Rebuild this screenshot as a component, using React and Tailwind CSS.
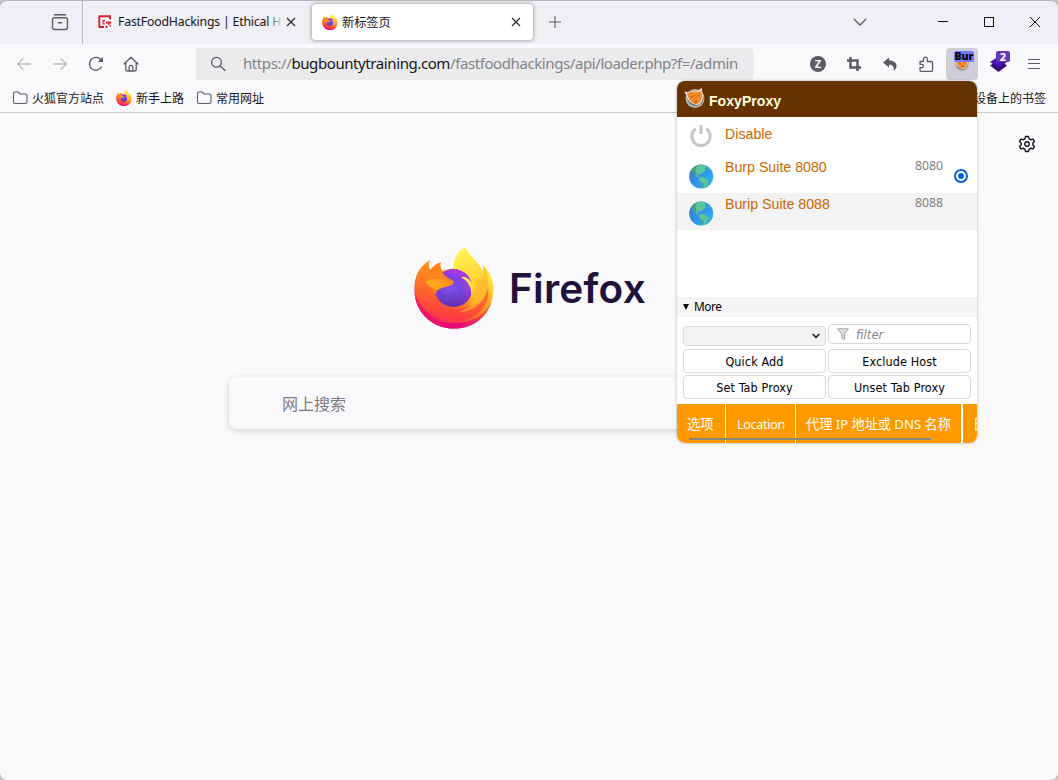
import React, { useId } from "react";

function FirefoxLogo({ className }) {
  const id = useId().replace(/[^a-zA-Z0-9]/g, "");
  const u = (n) => `url(#${id}${n})`;
  return (
    <svg viewBox="0 0 80 82" className={className}>
      <defs>
        <linearGradient id={id + "body"} x1="0.82" y1="0.1" x2="0.2" y2="0.95">
          <stop offset="0.05" stopColor="#fff44f" />
          <stop offset="0.3" stopColor="#ffc02f" />
          <stop offset="0.52" stopColor="#ff8a1c" />
          <stop offset="0.75" stopColor="#ff4a3a" />
          <stop offset="1" stopColor="#f0096d" />
        </linearGradient>
        <linearGradient id={id + "flame"} x1="0.3" y1="0" x2="0.6" y2="1">
          <stop offset="0" stopColor="#fff44f" />
          <stop offset="0.5" stopColor="#ffd83a" />
          <stop offset="1" stopColor="#ff9a1f" />
        </linearGradient>
        <linearGradient id={id + "face"} x1="0.6" y1="0" x2="0.4" y2="1">
          <stop offset="0.1" stopColor="#ff9a1c" />
          <stop offset="0.5" stopColor="#ff6e26" />
          <stop offset="0.95" stopColor="#ff3647" />
        </linearGradient>
        <linearGradient id={id + "rim"} x1="0" y1="0" x2="1" y2="0">
          <stop offset="0" stopColor="#f5156c" />
          <stop offset="0.6" stopColor="#e5067a" />
          <stop offset="1" stopColor="#ff5a35" />
        </linearGradient>
        <radialGradient id={id + "ball"} cx="0.42" cy="0.55" r="0.62">
          <stop offset="0" stopColor="#8a50f5" />
          <stop offset="0.45" stopColor="#7547e0" />
          <stop offset="1" stopColor="#b833e1" />
        </radialGradient>
        <linearGradient id={id + "shade"} x1="0" y1="0" x2="0" y2="1">
          <stop offset="0.5" stopColor="#4a3bb5" stopOpacity="0" />
          <stop offset="1" stopColor="#5a2b9c" stopOpacity="0.8" />
        </linearGradient>
        <linearGradient id={id + "snout"} x1="0" y1="0" x2="1" y2="0">
          <stop offset="0" stopColor="#ffb01f" />
          <stop offset="1" stopColor="#ff8d1d" />
        </linearGradient>
      </defs>
      <path d="M16 13C14 17 15 20 16 23C19 20 23 16 26.700 15.700C25.500 18 26.500 21 28 24C32 22 36 22 39.500 21.500C39 12 45 3 52 0C52 8 64 14 68 25C70 23 69 20 69 18C75 24 79.500 32 79.500 42C79.500 65 62 81.600 40 81.600C17 81.600 .5 64 .5 42C.5 29 5 20 16 13Z" fill={u("body")} />
      <path d="M.5 45C3 63 19 76 40 76C57 76 70 69 77 56C71 73 57 81.600 40 81.600C18 81.600 1 65 .5 45Z" fill={u("rim")} />
      <path d="M39.500 22C39 12 45 3 52 0C52 8 66 13 70 28C77 50 62 70 42 70C55 65 61 54 59 42C56 28 46 25 39.500 22Z" fill={u("flame")} />
      <path d="M16 13C14 17 15 20 16 23C19 20 23 16 26.700 15.700C25.500 18 26.500 21 28 24C21 31 22 33 22 41C22 54 31 62 42 62C52 62 59 56 66 56C70 51 73 46 74 40C77 60 60 75 40 75C18 75 3 58 .8 42C.8 29 5 20 16 13Z" fill={u("face")} />
      <path d="M74 34C75 53 60 65 45 65C55 62 61 55 62 47C64 39 62 34 59 30C68 35 71 30 69 18C73 23 74 28 74 34Z" fill="#ffb92c" opacity="0.7" />
      <circle cx="39.500" cy="41" r="19" fill={u("ball")} />
      <circle cx="39.500" cy="41" r="19" fill={u("shade")} />
      <path d="M47 30C52 29 58 34 60 40C63 48 60 55 54 59C58 51 58 43 55 38C53 34 50 32 47 30Z" fill={u("flame")} />
      <path d="M16 23C19 20 23 16 26.700 15.700C25.500 18 26.500 21 28 24C29 29 36 32 39.500 34C40 36 36 39 33 39.500C27 41 22 42 22 48C18 43 14 38 11 35C12 30 13 27 16 23Z" fill="#ff8420" />
      <path d="M11 35C17 31 28 32 39.500 35C39 38 35 39 31 40C26 41 24 44 21 42C17 40 14 38 11 35Z" fill={u("snout")} />
    </svg>
  );
}

function Folder() {
  return (
    <svg viewBox="0 0 16 16" className="h-4 w-4 shrink-0" fill="none" stroke="#5b5b66" strokeWidth="1.100">
      <path d="M1.500 3.500a1.500 1.500 0 0 1 1.500-1.500h3.200l2 2H13.500a1.500 1.500 0 0 1 1.500 1.500v6.500a1.500 1.500 0 0 1-1.500 1.500H3a1.500 1.500 0 0 1-1.500-1.500z" />
    </svg>
  );
}

function Arrow({ className }) {
  return (
    <svg viewBox="0 0 16 16" className={className} fill="none" stroke="#bcbcc2" strokeWidth="1.300" strokeLinecap="round" strokeLinejoin="round">
      <path d="M14.500 8H1.500M7 2.800L1.500 8L7 13.200" />
    </svg>
  );
}

function Close({ className }) {
  return (
    <svg viewBox="0 0 10 10" className={className} fill="none" stroke="#2b2a33" strokeWidth="1.150">
      <path d="M1 1L9 9M9 1L1 9" />
    </svg>
  );
}

function FoxBadge({ className }) {
  return (
    <svg viewBox="0 0 22 22" className={className}>
      <circle cx="11" cy="11.500" r="9.500" fill="#b4b4b4" />
      <circle cx="11.500" cy="11" r="8" fill="#77736e" />
      <path d="M.3 4.500L5.500 5.500C8 3.800 12 3 14.500 3.500L17.500 .7L18.500 6C20 11 18 16.500 13.500 18C9 18 4 14 3 9.500Z" fill="#f3e7d8" />
      <path d="M3 6.500C7 4.500 12 3.800 15.500 5L17 3L17.800 7.500C18.500 12 16 16.500 12.500 17.300C8.500 16.500 5 13 4 9.500Z" fill="#f08a26" />
      <path d="M6.500 9.500L9.500 10.300M12.500 10L15 7.500" stroke="#b05a16" strokeWidth="1" />
      <path d="M10.500 14.200L13 13.500L12.300 15.800Z" fill="#8a4510" />
    </svg>
  );
}

function Globe() {
  const id = useId().replace(/[^a-zA-Z0-9]/g, "");
  return (
    <svg viewBox="0 0 24 24" className="h-[25px] w-[25px]">
      <defs>
        <linearGradient id={id} x1="0" y1="0" x2="1" y2="0.8">
          <stop offset="0" stopColor="#3f78b8" />
          <stop offset="0.5" stopColor="#2f92e6" />
          <stop offset="1" stopColor="#2fb4fb" />
        </linearGradient>
      </defs>
      <circle cx="11.700" cy="12" r="11.600" fill={`url(#${id})`} />
      <path d="M2.200 6C4 3 7 .8 11 .5L15 1.500L17 3L15 4.500L16.500 6.500L13.500 8L11 10.500L9 9.500L8 11.500L10 13L12.500 12.500L17 14L19.500 16.500L17.500 19L15.500 22.800L13 23.300L12 18L9.500 15.500L9.800 13.500L6.500 12L4.500 8Z" fill="#5bc69a" />
      <path d="M2.200 6C4 3.500 6 2 8 1.300L6 6L7.500 9L6.500 12L4.500 8ZM12 17L14 19L13.500 23.200L13 23.300Z" fill="#4f9a7c" />
      <path d="M19 3L20.500 5L20 7L18 5Z" fill="#4bbd9c" />
    </svg>
  );
}

function TabBar() {
  return (
    <div className="flex h-[44px] shrink-0 bg-[#f0eff4]">
      <div className="flex w-[83px] items-center border-r border-[#b8b8bd] pl-[51px]">
        <svg viewBox="0 0 18 18" className="h-[18px] w-[18px]" fill="none" stroke="#5b5b66" strokeWidth="1.400" strokeLinecap="round">
          <path d="M3.500 1.700H14.500M1.500 6.800Q1.500 4.700 3.500 4.700H14.500Q16.500 4.700 16.500 6.800V14.500Q16.500 16.500 14.500 16.500H3.500Q1.500 16.500 1.500 14.500ZM7.300 9.700H10.700" />
        </svg>
      </div>
      <div className="flex w-[223px] items-center pl-[14px]">
        <svg viewBox="0 0 16 16" className="h-4 w-4 shrink-0">
          <path d="M0 0H16V16H0Z" fill="#fff" />
          <path d="M13 5.500V2.300H2.300V13H7" fill="none" stroke="#e01b2b" strokeWidth="1.900" />
          <path d="M5.500 6H8V7.500H6.500V9.500H8V10.500H5.500Z" fill="#e01b2b" />
          <path d="M9 7.500H14.200V9.500H12.500V11H11V9.500H9ZM8.500 11.500H10.500V14H8.500ZM12.500 11H14V12.500H12.500Z" fill="#e01b2b" />
        </svg>
        <div className="relative ml-[5px] w-[165px] overflow-hidden pt-px text-[12.300px] tracking-[-0.2px] whitespace-nowrap text-[#15141a]">
          FastFoodHackings | Ethical H
          <div className="absolute inset-y-0 right-0 w-4 bg-gradient-to-r from-transparent to-[#f0eff4]" />
        </div>
        <Close className="ml-[3px] h-[10px] w-[10px] shrink-0" />
      </div>
      <div className="mt-1 ml-[6px] flex h-9 w-[221px] items-center rounded bg-white pl-[10px] shadow-[0_0_4px_rgba(0,0,0,0.45)]">
        <FirefoxLogo className="h-4 w-4" />
        <span className="ml-[4px] w-[50px] pt-[2px] text-[12.200px] whitespace-nowrap text-[#15141a]">新标签页</span>
        <Close className="ml-[119px] h-[10px] w-[10px]" />
      </div>
      <div className="flex flex-1 items-center pl-[16px]">
        <svg viewBox="0 0 12 12" className="h-3 w-3" stroke="#5b5b66" strokeWidth="1.100"><path d="M6 0V12M0 6H12" /></svg>
        <svg viewBox="0 0 14 8" className="ml-[292px] h-2 w-[14px]" fill="none" stroke="#5b5b66" strokeWidth="1.300"><path d="M1 1L7 7L13 1" /></svg>
        <svg viewBox="0 0 10 10" className="ml-[71px] h-[10px] w-[10px]" stroke="#111" strokeWidth="1"><path d="M0 4.500H10" /></svg>
        <div className="ml-[36px] h-[10px] w-[10px] border border-[#111]" />
        <svg viewBox="0 0 10 10" className="ml-[36px] h-[10px] w-[10px]" stroke="#111" strokeWidth="1"><path d="M0 0L10 10M10 0L0 10" /></svg>
      </div>
    </div>
  );
}

function NavBar() {
  return (
    <div className="flex h-[40px] shrink-0 items-center">
      <Arrow className="ml-[16px] h-4 w-4" />
      <Arrow className="ml-[20px] h-4 w-4 rotate-180" />
      <svg viewBox="0 0 16 16" className="ml-[20px] h-4 w-4" fill="none" stroke="#5b5b66" strokeWidth="1.300">
        <path d="M13.700 10.500A6.400 6.400 0 1 1 12.600 3.500L14.500 5.400" />
        <path d="M15 .8V6H9.800Z" fill="#5b5b66" stroke="none" />
      </svg>
      <svg viewBox="0 0 16 16" className="ml-[19px] h-4 w-4" fill="none" stroke="#5b5b66" strokeWidth="1.300" strokeLinejoin="round" strokeLinecap="round">
        <path d="M1 8L8 1.200L15 8M2.800 6.500V13.500Q2.800 15 4.300 15H11.700Q13.200 15 13.200 13.500V6.500M6.200 15V10.500Q6.200 9.300 8 9.300Q9.800 9.300 9.800 10.500V15" />
      </svg>
      <div className="ml-[57px] flex h-8 w-[558px] items-center rounded bg-[#ebebed] pl-[14px]">
        <svg viewBox="0 0 16 16" className="h-4 w-4 shrink-0" fill="none" stroke="#5b5b66" strokeWidth="1.300" strokeLinecap="round"><circle cx="6.500" cy="6.300" r="4.900" /><path d="M10.200 10L15 14.500" /></svg>
        <div className="ml-[17px] pb-[2px] text-[15px] leading-5 tracking-[-0.41px] whitespace-nowrap text-[#828287]">
          https://<span className="text-[#15141a]">bugbountytraining.com</span>/fastfoodhackings/api/loader.php?f=/admin
        </div>
      </div>
      <div className="ml-[56px] flex h-4 w-4 items-center justify-center rounded-full bg-[#5b5b66] text-[11px] font-bold text-white">Z</div>
      <svg viewBox="0 0 16 16" className="ml-[20px] h-4 w-4" fill="none" stroke="#5b5b66" strokeWidth="2.500"><path d="M4.500 1V11.500H15M1 4.500H11.500V15" /></svg>
      <svg viewBox="0 0 16 16" className="ml-[20px] h-4 w-4" fill="#5b5b66"><path d="M1 6.500L7 1.500V4.500C12 4.500 15 7 14.500 10.500C14.300 12.500 13 14 11.500 14.800C12.500 11.500 11 8.800 7 8.800V11.500Z" /></svg>
      <svg viewBox="0 0 16 16" className="ml-[20px] h-4 w-4" fill="none" stroke="#5b5b66" strokeWidth="1.300" strokeLinejoin="round">
        <path d="M2 5.500H5.500V3A1.900 1.900 0 0 1 9.300 3V5.500H13.500Q14.500 5.500 14.500 6.500V14.300Q14.500 15.300 13.500 15.300H3Q2 15.300 2 14.300V11.700H3.700A1.700 1.700 0 0 0 3.700 8.300H2Z" />
      </svg>
      <div className="relative ml-[12px] flex h-8 w-8 justify-center rounded bg-[#cfced7]">
        <FoxBadge className="mt-[8px] h-4 w-4" />
        <span className="absolute top-[3px] left-[8px] h-[11px] w-5 overflow-hidden rounded-[2px] bg-[#7878fa] text-center font-['Open_Sans',sans-serif] text-[10.500px] leading-[11px] font-extrabold text-black">Bur</span>
      </div>
      <div className="relative ml-[12px] h-5 w-5">
        <svg viewBox="0 0 20 20" className="h-5 w-5"><path d="M0 11.500L9 6L17 11.500L8.500 18Z" fill="#321078" /><path d="M0 8L9 2L17 8L8.500 14Z" fill="#4b11ad" /></svg>
        <span className="absolute -top-[3px] left-[6px] h-[11px] w-[14px] rounded-[2px] bg-[#6837bd] text-center text-[11px] leading-[11px] font-bold text-white">2</span>
      </div>
      <svg viewBox="0 0 12 12" className="ml-[18px] h-3 w-3" stroke="#5b5b66" strokeWidth="1.200"><path d="M0 1.500H12M0 5.500H12M0 10.500H12" /></svg>
    </div>
  );
}

function Bookmarks() {
  return (
    <div className="flex h-[29px] shrink-0 items-center border-b border-[#cbcbcf] pr-[12px] pl-[12px] text-[12px] text-[#15141a]">
      <Folder /><span className="ml-1 pt-[2px]">火狐官方站点</span>
      <FirefoxLogo className="ml-[12px] h-4 w-4" /><span className="ml-1 pt-[2px]">新手上路</span>
      <div className="ml-[12px]"><Folder /></div><span className="ml-1 pt-[2px]">常用网址</span>
      <span className="ml-auto pt-[2px]">移动设备上的书签</span>
    </div>
  );
}

function ProxyRow({ name, port, selected, className }) {
  return (
    <div className={`flex h-[37px] ${className}`}>
      <div className="mt-2 ml-3"><Globe /></div>
      <div className="mt-[1px] ml-[11px] w-[190px] text-[14.200px] leading-5 text-[#cc6600]">{name}</div>
      <div className="mt-[1px] w-[28px] font-['Noto_Sans',sans-serif] text-[12.200px] leading-[17px] text-[#7b7b80]">{port}</div>
      {selected && (
        <div className="mt-[13px] ml-[11px] flex h-[14px] w-[14px] items-center justify-center rounded-full border-2 border-[#0060df]">
          <div className="h-[6px] w-[6px] rounded-full bg-[#0060df]" />
        </div>
      )}
    </div>
  );
}

function PopupButton({ children }) {
  return <button className="flex h-6 w-[143px] items-center justify-center rounded border border-[#d9d9db] bg-white pt-[2px] text-[12.500px] tracking-[0.12px] text-black">{children}</button>;
}

function FoxyPopup() {
  return (
    <div className="absolute top-[81px] left-[677px] flex h-[362px] w-[300px] flex-col overflow-hidden rounded-lg bg-white font-['Liberation_Sans','Noto_Sans_CJK_SC',sans-serif] shadow-[0_0_3px_rgba(0,0,0,0.3)]">
      <div className="flex h-9 shrink-0 bg-[#663300] pl-[7px]">
        <FoxBadge className="mt-[6px] h-[22px] w-[22px]" />
        <span className="mt-[10px] ml-[3px] text-[14.100px] leading-5 font-bold text-[#ffffdc]">FoxyProxy</span>
      </div>
      <div className="flex h-[39px] shrink-0">
        <svg viewBox="0 0 24 24" className="mt-[7px] ml-[12px] h-6 w-6" fill="none" stroke="#c6c6c6" strokeWidth="3"><path d="M6.800 4.700A9.200 9.200 0 1 0 17.200 4.700M12 1V10" /></svg>
        <span className="mt-[7px] ml-[12px] text-[14.200px] leading-5 text-[#cc6600]">Disable</span>
      </div>
      <ProxyRow name="Burp Suite 8080" port="8080" selected className="bg-white" />
      <ProxyRow name="Burip Suite 8088" port="8088" className="bg-[#f3f3f3]" />
      <div className="mt-[67px] flex h-5 shrink-0 items-center bg-[#f4f4f4] pl-[6px] font-['Noto_Sans',sans-serif] text-[11.800px] tracking-[-0.4px] text-black">
        <svg viewBox="0 0 6 6" className="h-[6px] w-[6px]"><path d="M0 0H6L3 6Z" /></svg>
        <span className="ml-[5px]">More</span>
      </div>
      <div className="mt-[7px] grid grid-cols-[143px_143px] grid-rows-[23px_24px_24px] gap-x-[2px] gap-y-[2px] pl-[6px] font-['DejaVu_Sans_Condensed','DejaVu_Sans',sans-serif]">
        <div className="mt-[2px] flex h-5 items-center justify-end rounded border border-[#d9d9db] bg-[#f3f3f3] pr-[5px]">
          <svg viewBox="0 0 8 6" className="h-[6px] w-2" fill="none" stroke="#111" strokeWidth="1.500"><path d="M.7 1L4 4.500L7.300 1" /></svg>
        </div>
        <div className="flex h-5 items-center rounded border border-[#d9d9db] bg-white pl-[8px]">
          <svg viewBox="0 0 12 12" className="h-3 w-3" fill="#dededf" stroke="#a4a4a7" strokeWidth="1"><path d="M.6 .8H11.400L7.400 6V11.500L4.800 10V6Z" /></svg>
          <span className="ml-[7px] pt-px text-[13px] text-[#85858a] italic">filter</span>
        </div>
        <PopupButton>Quick Add</PopupButton>
        <PopupButton>Exclude Host</PopupButton>
        <PopupButton>Set Tab Proxy</PopupButton>
        <PopupButton>Unset Tab Proxy</PopupButton>
      </div>
      <div className="relative mt-auto flex h-[39px] shrink-0 bg-[#ff9900] text-[13.300px] leading-[41px] whitespace-nowrap text-white">
        <div className="w-[49px] border-r border-[#fff3df] pl-[10px]">选项</div>
        <div className="w-[70px] border-r border-[#fff3df] pl-px text-center font-['Noto_Sans',sans-serif] text-[12.500px] tracking-[-0.3px]">Location</div>
        <div className="w-[167px] border-r-2 border-white pl-[10px] font-['Noto_Sans','Noto_Sans_CJK_SC',sans-serif] text-[13.150px]">代理 IP 地址或 DNS 名称</div>
        <div className="w-[14px] overflow-hidden pl-[10px]">日志</div>
        <div className="absolute bottom-[3px] left-[12px] h-[2px] w-[242px] bg-[#8b8580]" />
      </div>
    </div>
  );
}

export default function App() {
  return (
    <div className="h-[780px] w-[1058px] overflow-hidden bg-[#c4c4c6] font-['Noto_Sans','Noto_Sans_CJK_SC',sans-serif]">
      <div className="relative flex h-full flex-col overflow-hidden rounded-lg border-t border-[#b5b5b8] bg-[#f9f9fb]">
        <div className="-mt-px flex h-full flex-col">
          <TabBar />
          <NavBar />
          <Bookmarks />
          <main className="flex-1">
            <div className="flex justify-end pt-[22px] pr-[22px]">
              <svg viewBox="0 0 18 18" className="h-[18px] w-[18px]" fill="none" stroke="#15141a" strokeWidth="1.400" strokeLinejoin="round">
                <path d="M7.600 1.500H10.400L11.200 3.900L12.600 4.700L15 4.100L16.400 6.600L14.800 8.300V9.700L16.400 11.400L15 13.900L12.600 13.300L11.200 14.100L10.400 16.500H7.600L6.800 14.100L5.400 13.300L3 13.900L1.600 11.400L3.200 9.700V8.300L1.600 6.600L3 4.100L5.400 4.700L6.800 3.900Z" /><circle cx="9" cy="9" r="2.200" />
              </svg>
            </div>
            <div className="mt-[95px] ml-[414px] flex h-[82px]">
              <FirefoxLogo className="-mt-px h-[82px] w-20" />
              <span className="mt-[11px] ml-[15px] font-['Inter',sans-serif] text-[40.500px] leading-[60px] font-semibold tracking-[0.25px] text-[#20123a]">Firefox</span>
            </div>
            <div className="mt-[47px] ml-[229px] flex h-[52px] w-[600px] items-center rounded-lg bg-[#f9f9fb] pt-[2px] pl-[53px] text-[16px] text-[#7b7a83] shadow-[0_2px_6px_rgba(58,57,68,0.2)]">网上搜索</div>
          </main>
        </div>
        <div className="absolute -top-px left-0 flex h-[780px]"><FoxyPopup /></div>
      </div>
    </div>
  );
}
